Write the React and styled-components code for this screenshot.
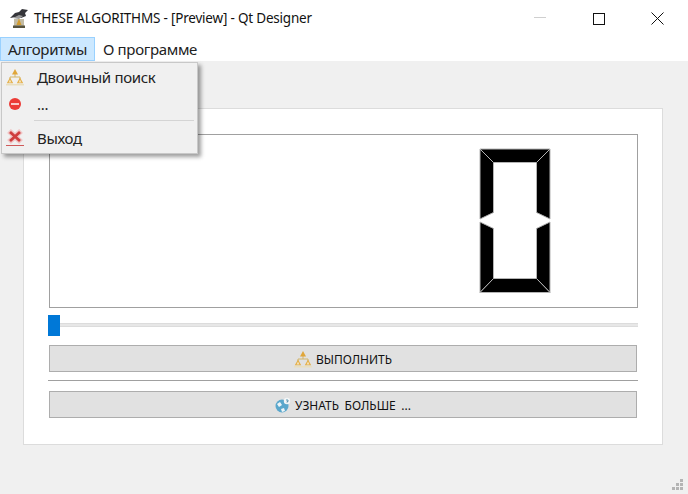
import React from 'react';
import styled, { createGlobalStyle } from 'styled-components';

const Global = createGlobalStyle`
	html, body { margin: 0; padding: 0; background: #fff; }
	body { font-family: "Noto Sans", "Open Sans", sans-serif; color: #1a1a1a; }
`;

const Win = styled.div`
	position: relative;
	width: 688px;
	height: 494px;
	display: flex;
	flex-direction: column;
	overflow: hidden;
`;

const TitleBar = styled.div`
	flex: 0 0 37px;
	display: flex;
	align-items: center;
	padding: 0 1px 0 10px;
	background: #fff;
`;

const Title = styled.div`
	flex: 1 1 auto;
	margin: -2px 0 0 6px;
	font-size: 13.5px;
	letter-spacing: -0.2px;
	color: #111;
`;

const WinBtn = styled.div`
	flex: 0 0 59px;
	height: 37px;
	display: flex;
	align-items: center;
	justify-content: center;
`;

const MenuBar = styled.div`
	flex: 0 0 24px;
	display: flex;
	align-items: stretch;
	background: #fff;
`;

const MenuItem = styled.div`
	display: flex;
	align-items: center;
	padding: 0 7px;
	font-size: 15px;
	letter-spacing: -0.34px;
	color: #222;
	border: 1px solid ${p => (p.$open ? '#99d1ff' : 'transparent')};
	background: ${p => (p.$open ? '#cce8ff' : 'transparent')};
`;

const Popup = styled.div`
	position: absolute;
	left: 1px;
	top: 62px;
	width: 197px;
	height: 92px;
	background: #f0f0f0;
	border: 1px solid #c8c8c8;
	box-shadow: 3px 3px 4px rgba(0, 0, 0, 0.38);
	display: flex;
	flex-direction: column;
	box-sizing: border-box;
	z-index: 5;
`;

const PopupRow = styled.div`
	flex: 0 0 27px;
	display: flex;
	align-items: center;
	padding-left: 4px;
	font-size: 15px;
	letter-spacing: -0.32px;
	color: #222;
	gap: 13px;
`;

const IconBox = styled.span`
	flex: 0 0 18px;
	height: 18px;
	display: flex;
	align-items: center;
	justify-content: center;
`;

const PopupSep = styled.div`
	flex: 0 0 1px;
	margin: 3px 3px 3px 32px;
	background: #d4d4d4;
`;

const Body = styled.div`
	flex: 1 1 auto;
	background: #f0f0f0;
	padding: 47px 25px 49px 23px;
	display: flex;
`;

const Panel = styled.div`
	flex: 1 1 auto;
	background: #fff;
	border: 1px solid #dcdcdc;
	padding: 25px 25px 25px 25px;
	display: flex;
	flex-direction: column;
`;

const Lcd = styled.div`
	flex: 0 0 174px;
	box-sizing: border-box;
	margin-right: -1px;
	border: 1px solid #a0a0a0;
	display: flex;
	justify-content: flex-end;
	align-items: center;
	padding-right: 86px;
`;

const Slider = styled.div`
	height: 22px;
	margin: 6px -1px 9px -1px;
	display: flex;
	align-items: center;
`;

const Handle = styled.div`
	flex: 0 0 12px;
	height: 21px;
	background: #0078d7;
`;

const Groove = styled.div`
	flex: 1 1 auto;
	height: 4px;
	background: #e7e7e7;
	border-top: 1px solid #dcdcdc;
	border-bottom: 1px solid #dcdcdc;
	box-sizing: border-box;
`;

const Button = styled.div`
	flex: 0 0 27px;
	box-sizing: border-box;
	border: 1px solid #adadad;
	background: #e1e1e1;
	display: flex;
	align-items: center;
	justify-content: center;
	gap: 4px;
	font-size: 12px;
	word-spacing: 2.5px;
	color: #111;
`;

const ButtonText = styled.span`
	position: relative;
	top: 1px;
`;

const Line = styled.div`
	flex: 0 0 1px;
	margin: 8px -1px 10px -1px;
	background: #a0a0a0;
`;

const Grip = styled.svg`
	position: absolute;
	right: 4px;
	bottom: 3px;
`;

const TreeIcon = () => (
	<svg width="18" height="18" viewBox="0 0 18 18">
		<path d="M9 6v3M4 11V9h10v2" stroke="#d2b56a" strokeWidth="1" fill="none" />
		<path d="M9 1l3 5.5H6z" fill="#e0a63a" />
		<path d="M4 9.5l3.2 5.8H0.8z" fill="#e3ad45" />
		<path d="M14 9.5l3.2 5.8h-6.4z" fill="#e3ad45" />
		<path d="M4 11.5l1.5 3h-3zM14 11.5l1.5 3h-3z" fill="#f6e3b6" />
		<rect x="0" y="16" width="18" height="1.5" fill="#e9dfbf" />
	</svg>
);

const StopIcon = () => (
	<svg width="16" height="16" viewBox="0 0 16 16">
		<circle cx="8" cy="8" r="6" fill="#ec3b36" />
		<rect x="4" y="7" width="8" height="2" fill="#f9c9c6" />
	</svg>
);

const ExitIcon = () => (
	<svg width="18" height="18" viewBox="0 0 18 18">
		<path d="M3 2l12 11M15 2L3 13" stroke="#f0c4c4" strokeWidth="5.5" />
		<path d="M4 3l10 9M14 3l-10 9" stroke="#cf3c3c" strokeWidth="2.8" />
		<rect x="0" y="16" width="18" height="1" fill="#cf5a5a" />
	</svg>
);

const GlobeIcon = () => (
	<svg width="16" height="16" viewBox="0 0 16 16">
		<circle cx="7" cy="9" r="6.5" fill="#5aa7cc" />
		<path d="M2 7l3-2 2 3-3 2zM6 12l3-1 1 3-3 1z" fill="#eef5f8" />
		<circle cx="12" cy="4" r="3.2" fill="#f3f6f7" />
		<path d="M11 3h2v1.6h-1v1" stroke="#4f8ba6" strokeWidth="0.9" fill="none" />
	</svg>
);

const AppLogo = () => (
	<svg width="18" height="19" viewBox="0 0 18 19">
		<path d="M0 9l5-5 4-1 3-3 6 1-3 3 1 3-5 2-5-1z" fill="#35353a" />
		<path d="M3 9l6-3 4 1-4 3z" fill="#9a9a9a" />
		<rect x="4" y="10" width="10" height="7" fill="#c3bca6" />
		<path d="M9 9.5l2.5 6.5h-5z" fill="#d39c2f" />
		<rect x="3" y="16.5" width="12" height="2.5" fill="#57533f" />
	</svg>
);

const Digit = () => (
	<svg width="72" height="146" viewBox="0 0 72 146">
		<g stroke="#b4b4b4" strokeWidth="1" strokeLinejoin="miter">
			<path d="M1 1H71L57.5 14.5H14.5z" fill="#000" />
			<path d="M1 1L14.5 14.5V64.5L1 71z" fill="#000" />
			<path d="M71 1L57.5 14.5V64.5L71 71z" fill="#000" />
			<path d="M1 74L14.5 80.5V130.5L1 144.5z" fill="#000" />
			<path d="M71 74L57.5 80.5V130.5L71 144.5z" fill="#000" />
			<path d="M1 144.5H71L57.5 130.5H14.5z" fill="#000" />
		</g>
	</svg>
);

const App = () => (
	<Win>
		<Global />
		<TitleBar>
			<AppLogo />
			<Title>THESE ALGORITHMS - [Preview] - Qt Designer</Title>
			<WinBtn>
				<svg width="12" height="12" viewBox="0 0 12 12"><path d="M0 4.5h12" stroke="#cfcfcf" /></svg>
			</WinBtn>
			<WinBtn>
				<svg width="12" height="12" viewBox="0 0 12 12"><rect x="0.5" y="0.5" width="11" height="11" fill="none" stroke="#111" /></svg>
			</WinBtn>
			<WinBtn>
				<svg width="13" height="13" viewBox="0 0 13 13"><path d="M0.5 0.5l12 12M12.5 0.5l-12 12" stroke="#111" /></svg>
			</WinBtn>
		</TitleBar>
		<MenuBar>
			<MenuItem $open>Алгоритмы</MenuItem>
			<MenuItem>О программе</MenuItem>
		</MenuBar>
		<Popup>
			<PopupRow><IconBox><TreeIcon /></IconBox>Двоичный поиск</PopupRow>
			<PopupRow><IconBox><StopIcon /></IconBox>...</PopupRow>
			<PopupSep />
			<PopupRow><IconBox><ExitIcon /></IconBox>Выход</PopupRow>
		</Popup>
		<Body>
			<Panel>
				<Lcd><Digit /></Lcd>
				<Slider>
					<Handle />
					<Groove />
				</Slider>
				<Button><TreeIcon /><ButtonText>ВЫПОЛНИТЬ</ButtonText></Button>
				<Line />
				<Button><GlobeIcon /><ButtonText>УЗНАТЬ БОЛЬШЕ ...</ButtonText></Button>
			</Panel>
		</Body>
		<Grip width="12" height="12" viewBox="0 0 12 12" fill="#b4b4b4">
			<rect x="8" y="0" width="3" height="3" />
			<rect x="4" y="4" width="3" height="3" />
			<rect x="8" y="4" width="3" height="3" />
			<rect x="0" y="8" width="3" height="3" />
			<rect x="4" y="8" width="3" height="3" />
			<rect x="8" y="8" width="3" height="3" />
		</Grip>
	</Win>
);

export default App;
